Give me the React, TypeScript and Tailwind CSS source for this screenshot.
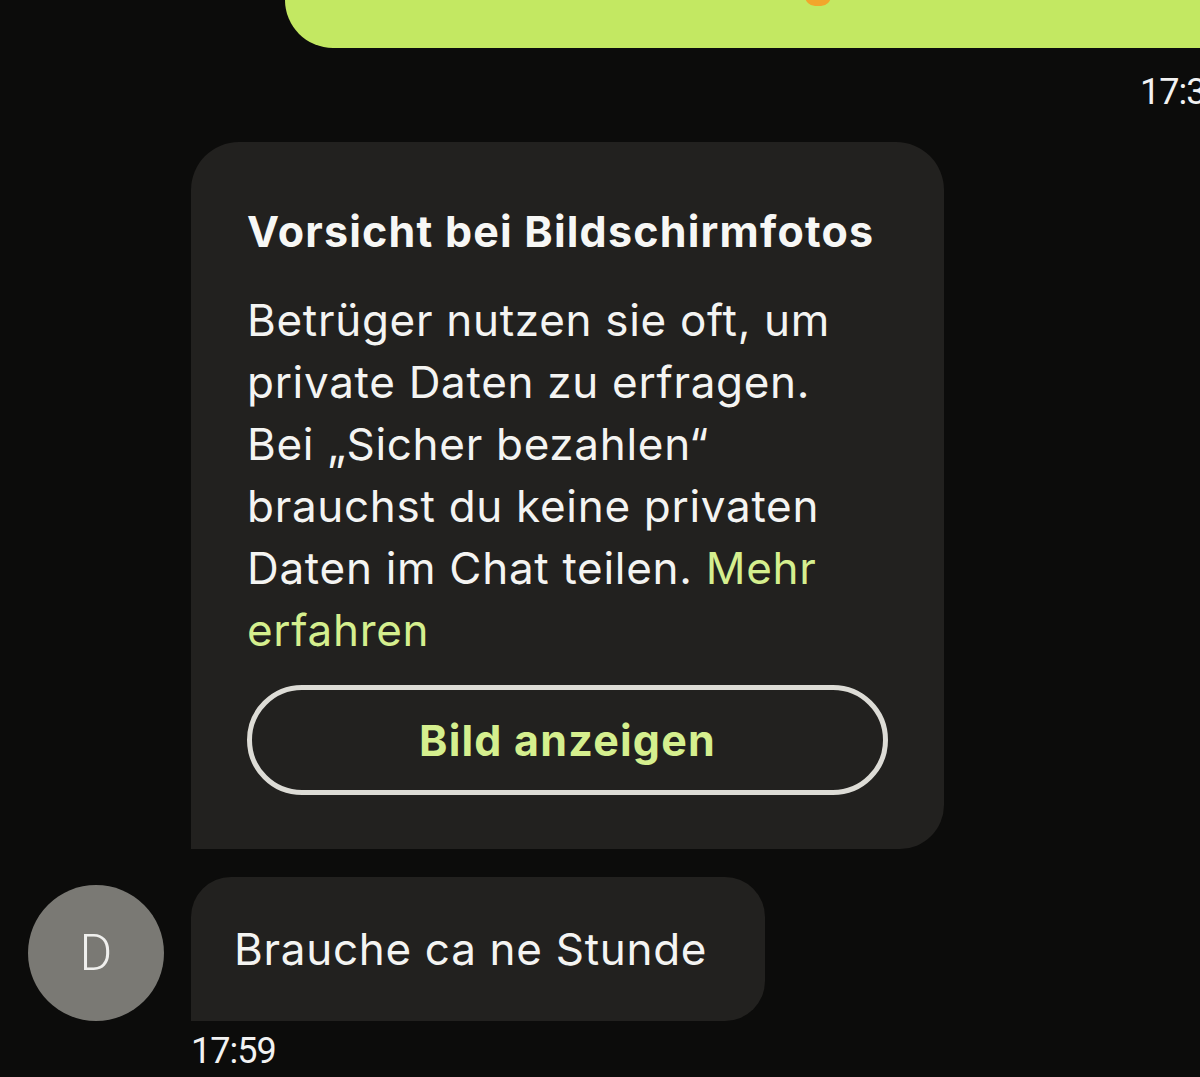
import React from "react";

export default function App() {
  return (
    <div
      className="w-[1200px] h-[1077px] overflow-hidden bg-[#0c0c0b] flex flex-col text-white"
      style={{ fontFamily: "Inter, 'Noto Sans', sans-serif" }}
    >
      {/* outgoing green bubble (cut at top) */}
      <div className="relative ml-[285px] -mr-[60px] h-[48px] bg-[#c3e862] rounded-bl-[48px] shrink-0">
        <div className="absolute left-[520px] top-[-14px] w-[26px] h-[20px] rounded-full bg-[#f2a52c]" />
      </div>

      {/* outgoing time */}
      <div className="flex justify-end mt-[26px] shrink-0">
        <span
          className="w-[96px] -mr-[36px] shrink-0 text-[36px] leading-[36px] tracking-[-1px] text-[#f2f2f2]"
          style={{ fontFamily: "Roboto, 'Liberation Sans', sans-serif" }}
        >
          17:38
        </span>
      </div>

      {/* warning card */}
      <div className="ml-[191px] mt-[32px] w-[753px] shrink-0 bg-[#22211f] rounded-tl-[48px] rounded-tr-[48px] rounded-br-[44px] pt-[64px] px-[56px] pb-[54px]">
        <h2 className="text-[43px] leading-[50px] font-bold text-[#f7f7f5] tracking-[1.2px] whitespace-nowrap">
          Vorsicht bei Bildschirmfotos
        </h2>
        <p className="mt-[33px] text-[44px] leading-[62px] text-[#f4f4f2] tracking-[0.7px] whitespace-nowrap">
          Betrüger nutzen sie oft, um
          <br />
          private Daten zu erfragen.
          <br />
          Bei „Sicher bezahlen“
          <br />
          brauchst du keine privaten
          <br />
          Daten im Chat teilen. <span className="text-[#d5ef8e]">Mehr</span>
          <br />
          <span className="text-[#d5ef8e]">erfahren</span>
        </p>
        <button className="mt-[24px] w-full h-[110px] rounded-full border-[5px] border-[#dddcd6] flex items-center justify-center text-[43px] font-bold tracking-[1.2px] text-[#d5ef8e]">
          Bild anzeigen
        </button>
      </div>

      {/* incoming message */}
      <div className="ml-[28px] mt-[28px] flex items-end gap-[27px] shrink-0">
        <div
          className="w-[136px] h-[136px] rounded-full bg-[#7a7974] flex items-center justify-center text-[50px] font-light text-[#f0f0ee]"
          style={{ fontFamily: "Roboto, 'Liberation Sans', sans-serif" }}
        >
          D
        </div>
        <div className="w-[574px] h-[144px] bg-[#22211f] rounded-[40px] rounded-bl-none flex items-center pl-[43px] text-[44px] tracking-[0.7px] text-[#f4f4f2] whitespace-nowrap">
          Brauche ca ne Stunde
        </div>
      </div>

      {/* incoming time */}
      <div
        className="ml-[191px] mt-[12px] text-[36px] leading-[36px] tracking-[-1px] text-[#f2f2f2] shrink-0"
        style={{ fontFamily: "Roboto, 'Liberation Sans', sans-serif" }}
      >
        17:59
      </div>
    </div>
  );
}
